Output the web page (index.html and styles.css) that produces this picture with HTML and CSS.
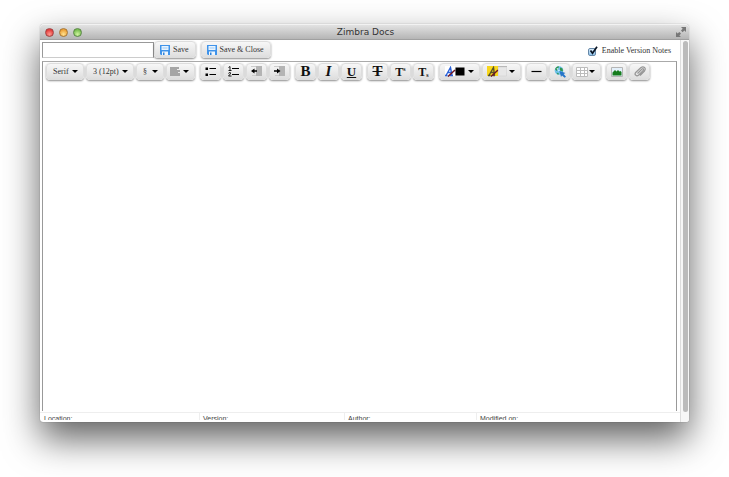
FILE: index.html
```html
<!DOCTYPE html>
<html lang="en">
<head>
<meta charset="utf-8">
<title>Zimbra Docs</title>
<link rel="stylesheet" href="styles.css">
</head>
<body>
<main class="window">
  <header class="titlebar">
    <div class="lights">
      <button class="light red" aria-label="Close"></button>
      <button class="light amber" aria-label="Minimize"></button>
      <button class="light green" aria-label="Zoom"></button>
    </div>
    <h1>Zimbra Docs</h1>
    <button class="fullscreen" aria-label="Full screen">
      <svg width="10" height="10" viewBox="0 0 10 10"><path d="M5 0h5v5L8.400 3.500 6.600 5.200 5 3.500 6.700 1.700zM0 5l1.600 1.600L3.400 5 5 6.600 3.400 8.400 5 10H0z" fill="#777"/></svg>
    </button>
  </header>
  <div class="body">
    <div class="content">
      <div class="actions">
        <input class="name" type="text" aria-label="Document name">
        <button class="btn save"><svg width="10" height="10" viewBox="0 0 10 10"><path d="M0 0h10v10H1L0 9z" fill="#3f93ea"/><path d="M1.500 1h7v4h-7z" fill="#e8f4ff"/><path d="M2 6.500h6V10H2z" fill="#eef6fd"/><path d="M3 7.500h1.500V10H3z" fill="#2f83dc"/><path d="M2.500 3h5" stroke="#9bc9f5"/></svg>Save</button>
        <button class="btn save close"><svg width="10" height="10" viewBox="0 0 10 10"><path d="M0 0h10v10H1L0 9z" fill="#3f93ea"/><path d="M1.500 1h7v4h-7z" fill="#e8f4ff"/><path d="M2 6.500h6V10H2z" fill="#eef6fd"/><path d="M3 7.500h1.500V10H3z" fill="#2f83dc"/><path d="M2.500 3h5" stroke="#9bc9f5"/></svg>Save &amp; Close</button>
        <label class="notes"><span class="tick"><input type="checkbox" checked><svg width="10" height="10" viewBox="0 0 10 10"><path d="M2.500 4.500L4.500 7.200 9 .8" fill="none" stroke="#0a1524" stroke-width="1.700"/></svg></span>Enable Version Notes</label>
      </div>
      <section class="editor">
        <div class="toolbar" role="toolbar" aria-label="Formatting">
          <div class="group">
            <span class="btn drop font"><select aria-label="Font"><option>Serif</option></select></span>
            <span class="btn drop size"><select aria-label="Size"><option>3 (12pt)</option></select></span>
            <span class="btn drop para"><select aria-label="Paragraph style"><option>§</option></select></span>
            <button class="btn drop mid" aria-label="Align"><svg width="10" height="9" viewBox="0 0 10 9"><path d="M0 0h9v2H7v1h3v2H8v1h2v3H0z" fill="#a5a5a5"/></svg></button>
          </div>
          <div class="group">
            <button class="btn" aria-label="Bulleted list"><svg width="11" height="11" viewBox="0 0 11 11"><path d="M.5 1.500h2.500v2.500H.5zM.5 7.500h2.500V10H.5z"/><path d="M4.500 2.500H11M4.500 8.500H11" stroke="#000"/></svg></button>
            <button class="btn" aria-label="Numbered list"><svg width="11" height="11" viewBox="0 0 11 11"><path d="M4 2.500h7M4 8.500h7" stroke="#000"/><path d="M.5 1.500L2 .5V4.500M.5 4.500h3M.5 7.500Q1 6 2.500 6.700 3 7.700 .5 10H3.500" fill="none" stroke="#000" stroke-width=".9"/></svg></button>
            <button class="btn" aria-label="Outdent"><svg width="11" height="11" viewBox="0 0 11 11"><path d="M5 0h6v10H1V9h4z" fill="#b4b4b4"/><path d="M0 .5h5M1 9.500h4" stroke="#ccc"/><path d="M6 5H2" stroke="#000" stroke-width="1.500"/><path d="M0 5l3.500-2.500v5z"/></svg></button>
            <button class="btn" aria-label="Indent"><svg width="11" height="11" viewBox="0 0 11 11"><path d="M5 0h6v10H1V9h4z" fill="#b4b4b4"/><path d="M0 .5h5M1 9.500h4" stroke="#ccc"/><path d="M0 5h4" stroke="#000" stroke-width="1.500"/><path d="M6.500 5L3 2.500v5z"/></svg></button>
          </div>
          <div class="group">
            <button class="btn glyph" aria-label="Bold"><b>B</b></button>
            <button class="btn glyph" aria-label="Italic"><i>I</i></button>
            <button class="btn glyph under" aria-label="Underline"><u>U</u></button>
          </div>
          <div class="group">
            <button class="btn glyph" aria-label="Strikethrough"><s>T</s></button>
            <button class="btn glyph small" aria-label="Superscript">T<sup>s</sup></button>
            <button class="btn glyph small" aria-label="Subscript">T<sub>s</sub></button>
          </div>
          <div class="group">
            <button class="btn drop wide" aria-label="Text color"><svg width="20" height="11" viewBox="0 0 20 11"><path d="M0 0h10v10H0z" fill="#fff"/><path d="M0 9.500h2.500M5 9.500h3M1 9.500L5.500 1.500 7 9.500M2.500 6.500h4" stroke="#2b62d9" stroke-width="1.400" fill="none"/><path d="M3 10.500L10 4" stroke="#6d1424" stroke-width="1.500"/><path d="M10.500 1.500h9v8h-9z"/></svg></button>
            <button class="btn drop back" aria-label="Background color"><svg width="20" height="11" viewBox="0 0 20 11"><path d="M0 0h11v10H0z" fill="#f8d61c"/><path d="M1 9.500h2.500M6 9.500h2M2 9.500L6.500 1.500 7.500 9.500M3.500 6.500h4" stroke="#55522b" stroke-width="1.400" fill="none"/><path d="M4 10.500L11 4" stroke="#6d1424" stroke-width="1.500"/><path d="M11.500 1h8v9h-8z" fill="#e7e7e7" stroke="#d2d2d2" stroke-width=".6"/><path d="M11 .5h9" stroke="#b8b8b8"/></svg></button>
          </div>
          <div class="group">
            <button class="btn" aria-label="Horizontal rule"><svg width="11" height="11" viewBox="0 0 11 11"><path d="M.5 5.500h10" stroke="#000" stroke-width="1.200"/></svg></button>
            <button class="btn" aria-label="Insert link"><svg width="12" height="12" viewBox="0 0 12 12"><circle cx="5" cy="4.500" r="4.300" fill="#6cc0ea"/><path d="M1 3Q3-.5 5 .5L4 3 2.500 5zM6 1.500l2.500 1 .5 3-3-1zM2.500 6.500l2.500 1-1 1.500z" fill="#2f9550"/><path d="M2.500 2.500l2-.5-1 2zM4.500 3.500l1.500 1-2 1z" fill="#e4f8ff"/><path d="M5.500 5l6 2-1.800 1 2.300 2.800-1.400 1L8 9.500 7 11z" fill="#2675c9"/></svg></button>
            <button class="btn drop mid" aria-label="Insert table"><svg width="12" height="10" viewBox="0 0 12 10"><path d="M.5.5h11v9H.5z" fill="#fff"/><path d="M.5.5h11v9H.5zM.5 3.500h11M.5 6.500h11M4.500.5v9M8.500.5v9" fill="none" stroke="#bcbcbc"/></svg></button>
          </div>
          <div class="group">
            <button class="btn" aria-label="Insert image"><svg width="12" height="10" viewBox="0 0 12 10"><path d="M.5.5h11v9H.5z" fill="#e3f0fa" stroke="#b5b5b5"/><path d="M1.500 8.500V5.500L4 3l1.500 1.500L7 3l1.500 1.500L9.500 4l1 1v3.500z" fill="#167c1d"/></svg></button>
            <button class="btn" aria-label="Attach file"><svg width="12" height="11" viewBox="0 0 12 11"><path d="M3.500 7.500L8 3Q9 2.300 9.500 3T9 4.700L4.500 9.200Q3 10.500 1.700 9.200T1.700 6.500L7 1.500Q9 .2 10.500 1.500T10.500 5L6 9.500" fill="none" stroke="#969696" stroke-width="1.200"/></svg></button>
          </div>
        </div>
        <textarea class="page" aria-label="Document body"></textarea>
      </section>
      <footer class="status"><span>Location:</span><span>Version:</span><span>Author:</span><span>Modified on:</span></footer>
    </div>
    <div class="scroll"><div class="thumb"></div></div>
  </div>
</main>
</body>
</html>
```
FILE: styles.css
```css
* { box-sizing: border-box; }
body {
  margin: 0;
  height: 100vh;
  padding: 24px 40px 55px;
  display: flex;
  overflow: hidden;
  background: #fff;
  font: 8px/10px "Liberation Serif", serif;
  color: #333;
}
button, input, select, textarea {
  margin: 0;
  padding: 0;
  border: 0;
  background: none;
  font: inherit;
  color: inherit;
  appearance: none;
  outline: none;
}
svg { display: block; flex: none; }
.window {
  flex: 1;
  display: flex;
  flex-direction: column;
  min-width: 0;
  border-radius: 4px 4px 3px 3px;
  background: #fff;
  box-shadow: 0 0 1px rgba(0, 0, 0, .5), 0 17px 36px rgba(0, 0, 0, .62);
}
.titlebar {
  flex: none;
  height: 16px;
  padding: 0 3px 0 5px;
  display: grid;
  grid-template-columns: 1fr auto 1fr;
  align-items: center;
  border-radius: 4px 4px 0 0;
  border-top: 1px solid #f2f2f2;
  border-bottom: 1px solid #a0a0a0;
  background: linear-gradient(#e2e2e2, #b5b5b5);
}
.titlebar h1 {
  margin: 0;
  font: 9px/14px "DejaVu Sans", sans-serif;
  color: #333;
}
.lights { display: flex; gap: 5px; }
.light {
  width: 9px;
  height: 9px;
  border-radius: 50%;
  border: 1px solid #777;
}
.red { background: radial-gradient(circle at 50% 75%, #ff9b90, #e33b3b 70%); border-color: #a04343; }
.amber { background: radial-gradient(circle at 50% 75%, #ffe291, #eda136 70%); border-color: #a67736; }
.green { background: radial-gradient(circle at 50% 75%, #d1f5a0, #77bd50 70%); border-color: #5a8746; }
.fullscreen { justify-self: end; }
.body { flex: 1; display: flex; min-height: 0; }
.content {
  flex: 1;
  min-width: 0;
  display: flex;
  flex-direction: column;
}
.actions {
  flex: none;
  display: flex;
  align-items: flex-start;
  height: 21px;
  padding: 1px 9px 0 2px;
}
.name {
  width: 112px;
  height: 16px;
  margin: 1px 0 0;
  padding: 0 3px;
  border: 1px solid #999;
  border-bottom-color: #ccc;
  background: #fff;
}
.btn {
  width: 21px;
  height: 17px;
  display: flex;
  align-items: center;
  justify-content: center;
  border: 1px solid #ddd;
  border-radius: 4px;
  background: linear-gradient(#f7f7f7, #dedede);
  box-shadow: 0 1px 2px rgba(0, 0, 0, .45);
}
.save { width: auto; padding: 0 6px 0 5px; gap: 3px; }
.close { margin-left: 5px; }
.notes {
  margin-left: auto;
  padding-top: 5px;
  display: flex;
  align-items: center;
  gap: 4px;
}
.tick { display: grid; }
.tick > * { grid-area: 1 / 1; }
.tick svg { pointer-events: none; }
.tick input {
  width: 8px;
  height: 8px;
  align-self: end;
  border: 1px solid #6688a8;
  border-radius: 2px;
  background: linear-gradient(#d8ebfa, #91c5ed);
}
.editor {
  flex: 1;
  min-height: 0;
  margin: 0 3px 0 2px;
  display: flex;
  flex-direction: column;
  border: 1px solid #999;
  border-top-color: #aaa;
  border-bottom: 0;
}
.toolbar { display: flex; gap: 5px; padding: 1px 3px; }
.group { display: flex; gap: 2px; }
.drop { justify-content: space-between; padding: 0 5px 0 4px; }
.drop::after {
  content: "";
  border: 3px solid transparent;
  border-top: 3px solid #000;
  border-bottom: 0;
}
.drop select { flex: 1; min-width: 0; height: 15px; margin-right: -6px; padding-right: 6px; }
.font { width: 38px; padding-left: 6px; }
.size { width: 48px; padding-left: 6px; }
.para { width: 28px; padding-left: 6px; }
.mid { width: 29px; }
.mid svg { margin-left: -1px; }
.wide { width: 41px; padding-left: 5px; }
.back { width: 39px; }
.glyph { font-size: 15px; line-height: 15px; color: #111; font-weight: bold; }
.glyph i { font-weight: bold; }
.under { font-size: 13px; }
.small { font-size: 12px; line-height: 12px; }
.small sup, .small sub { font-size: 6px; line-height: 6px; }
.small sup { align-self: flex-start; padding-top: 2px; }
.small sub { align-self: flex-end; padding-bottom: 1px; }
.page { flex: 1; width: 100%; padding: 6px; resize: none; }
.status {
  flex: none;
  height: 8px;
  margin: 1px 0 2px;
  overflow: hidden;
  display: grid;
  grid-template-columns: 159fr 145fr 132fr 204fr;
  border-top: 1px solid #eee;
  font: 7px/10px "Liberation Sans", sans-serif;
  color: #444;
}
.status span { padding: 1px 3px 0; border-left: 1px solid #eee; }
.status span:first-child { border-left-color: transparent; }
.scroll {
  flex: none;
  width: 9px;
  padding: 1px 1px 10px 2px;
  border-left: 1px solid #ddd;
  background: #f7f7f7;
  border-radius: 0 0 3px 0;
}
.thumb { height: 100%; border-radius: 3px; background: #bbb; }
```
